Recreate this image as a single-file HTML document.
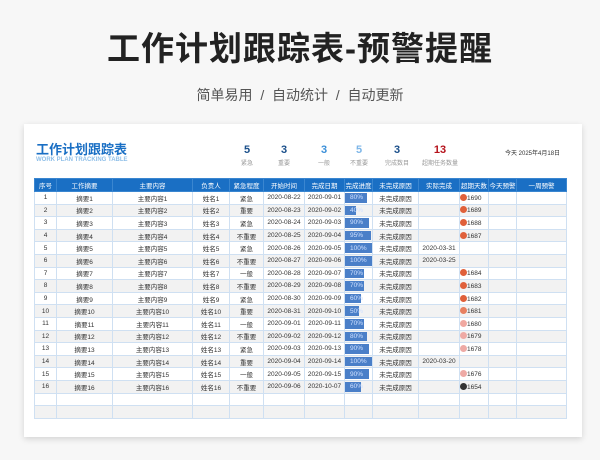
<!DOCTYPE html><html><head><meta charset="utf-8"><style>
*{margin:0;padding:0;box-sizing:border-box}
body{width:600px;height:460px;background:#f7f7f7;font-family:"Liberation Sans","Noto Sans CJK SC",sans-serif;position:relative;overflow:hidden}
.t{position:absolute;top:22px;left:0;width:600px;text-align:center;font-size:33px;font-weight:bold;color:#222;letter-spacing:1px}
.s{position:absolute;top:85px;left:0;width:600px;text-align:center;font-size:14px;color:#555}
.card{position:absolute;left:24px;top:124px;width:558px;height:313px;background:#fff;box-shadow:0 2px 6px rgba(0,0,0,.15)}
.h1{position:absolute;left:36px;top:139px;font-size:13px;font-weight:bold;color:#1a6fc4}
.h2{position:absolute;left:36px;top:157px;font-size:6px;color:#8fbfe8;font-weight:bold}
.st{position:absolute;top:144px;text-align:center;width:50px}
.st b{display:block;font-size:11px}
.st span{display:block;font-size:6px;color:#999;margin-top:2px}
.date{position:absolute;left:505px;top:148px;font-size:6px;color:#333}
table{position:absolute;left:34px;top:178px;width:532px;border-collapse:collapse;table-layout:fixed;font-size:6.5px;color:#333}
td,th{border:1px solid #cfe0f2;height:12.6px;text-align:center;white-space:nowrap;overflow:hidden;padding:0}
th{background:#1a6fc4;color:#fff;font-weight:normal;height:13px;border-color:#3a86d0}
tr:nth-child(even) td{background:#f2f2f2}
.p{position:relative;text-align:left}
.p i{position:absolute;left:0;top:1px;bottom:1px;background:#4a7fc8}
.p em{position:relative;font-style:normal;color:#cfe0ff;padding-left:5px}
.d{text-align:left}
.d i{display:inline-block;width:7px;height:7px;border-radius:50%;vertical-align:-1px}
</style></head><body>
<div class="t">工作计划跟踪表-预警提醒</div>
<div class="s">简单易用 &nbsp;/&nbsp; 自动统计 &nbsp;/&nbsp; 自动更新</div>
<div class="card"></div>
<div class="h1">工作计划跟踪表</div>
<div class="h2">WORK PLAN TRACKING TABLE</div>
<div class="st" style="left:222px"><b style="color:#1a4f8a">5</b><span>紧急</span></div>
<div class="st" style="left:259px"><b style="color:#1a4f8a">3</b><span>重要</span></div>
<div class="st" style="left:299px"><b style="color:#3b8fd8">3</b><span>一般</span></div>
<div class="st" style="left:334px"><b style="color:#7db6e8">5</b><span>不重要</span></div>
<div class="st" style="left:372px"><b style="color:#1a4f8a">3</b><span>完成数目</span></div>
<div class="st" style="left:415px"><b style="color:#b5121b">13</b><span>超期任务数量</span></div>
<div class="date">今天 2025年4月18日</div>
<table>
<colgroup><col style="width:22px"><col style="width:56px"><col style="width:80px"><col style="width:37px"><col style="width:34px"><col style="width:41px"><col style="width:40px"><col style="width:28px"><col style="width:46px"><col style="width:41px"><col style="width:29px"><col style="width:28px"><col style="width:50px"></colgroup>
<tr><th>序号</th><th>工作摘要</th><th>主要内容</th><th>负责人</th><th>紧急程度</th><th>开始时间</th><th>完成日期</th><th>完成进度</th><th>未完成原因</th><th>实际完成</th><th>超期天数</th><th>今天预警</th><th>一周预警</th></tr>
<tbody id="b"></tbody>
</table>
<script>
var d=[["紧急","08-22","09-01",80,"",1690,"#e0603a"],["重要","08-23","09-02",40,"",1689,"#e0603a"],["紧急","08-24","09-03",90,"",1688,"#e0603a"],["不重要","08-25","09-04",95,"",1687,"#e0603a"],["紧急","08-26","09-05",100,"2020-03-31"],["不重要","08-27","09-06",100,"2020-03-25"],["一般","08-28","09-07",70,"",1684,"#e0603a"],["不重要","08-29","09-08",70,"",1683,"#e0603a"],["紧急","08-30","09-09",60,"",1682,"#e0603a"],["重要","08-31","09-10",50,"",1681,"#e88060"],["一般","09-01","09-11",70,"",1680,"#f0a8a0"],["不重要","09-02","09-12",80,"",1679,"#eeaaa5"],["紧急","09-03","09-13",90,"",1678,"#eeaaa5"],["重要","09-04","09-14",100,"2020-03-20"],["一般","09-05","09-15",90,"",1676,"#eeaaa5"],["不重要","09-06","10-07",60,"",1654,"#333"]];
var h="";d.forEach(function(r,i){var n=i+1;h+="<tr><td>"+n+"</td><td>摘要"+n+"</td><td>主要内容"+n+"</td><td>姓名"+n+"</td><td>"+r[0]+"</td><td>2020-"+r[1]+"</td><td>2020-"+r[2]+"</td><td class='p'><i style='width:"+r[3]+"%'></i><em>"+r[3]+"%</em></td><td>未完成原因</td><td>"+r[4]+"</td><td class='d'>"+(r[5]?"<i style='background:"+r[6]+"'></i>"+r[5]:"")+"</td><td></td><td></td></tr>";});
for(var k=0;k<2;k++){h+="<tr>"+"<td></td>".repeat(13)+"</tr>";}
document.getElementById("b").innerHTML=h;
</script>
</body></html>
